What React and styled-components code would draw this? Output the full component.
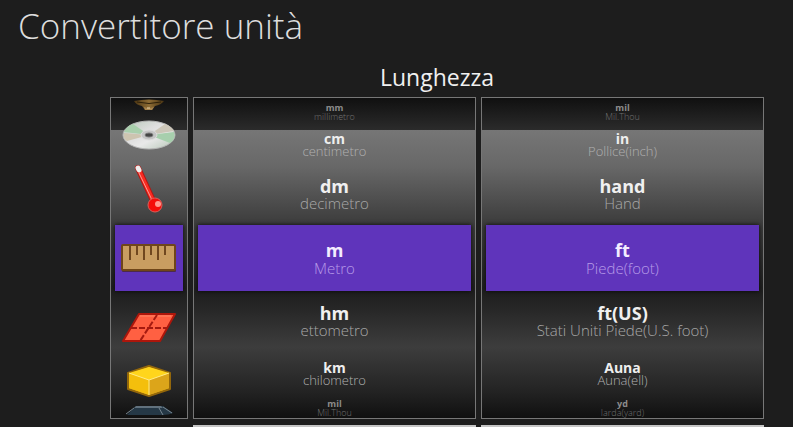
import React, { useState } from "react";
import styled, { createGlobalStyle, css } from "styled-components";

// Each wheel has seven visible slots, the fourth one is the selected unit
const SELECTED = 3;

const fromUnits = [
  { symbol: "mm", name: "millimetro" },
  { symbol: "cm", name: "centimetro" },
  { symbol: "dm", name: "decimetro" },
  { symbol: "m", name: "Metro" },
  { symbol: "hm", name: "ettometro" },
  { symbol: "km", name: "chilometro" },
  { symbol: "mil", name: "Mil.Thou" },
];

const toUnits = [
  { symbol: "mil", name: "Mil.Thou" },
  { symbol: "in", name: "Pollice(inch)" },
  { symbol: "hand", name: "Hand" },
  { symbol: "ft", name: "Piede(foot)" },
  { symbol: "ft(US)", name: "Stati Uniti Piede(U.S. foot)" },
  { symbol: "Auna", name: "Auna(ell)" },
  { symbol: "yd", name: "Iarda(yard)" },
];

// Icons
const HornIcon = () => (
  <svg width="60" height="22" viewBox="0 0 60 22" aria-hidden="true">
    <defs>
      <linearGradient id="horn" x1="0" x2="1">
        <stop offset="0" stopColor="#4a3412" />
        <stop offset="0.5" stopColor="#8d6c35" />
        <stop offset="1" stopColor="#4a3412" />
      </linearGradient>
    </defs>
    <path d="M15 3Q30 0 45 3Q42 7 36 8L33 12H26L23 8Q17 7 15 3Z" fill="url(#horn)" />
    <path d="M18 4Q30 7 42 4" fill="none" stroke="#2d2009" />
    <path d="M25 9Q30 11 35 9L33 12H26Z" fill="#a6834c" />
    <path d="M28 10H31" stroke="#e6d2a9" />
  </svg>
);

const DiscIcon = () => (
  <svg width="60" height="34" viewBox="0 0 60 34" aria-hidden="true">
    <defs>
      <linearGradient id="disc" x1="0" y1="0" x2="1" y2="1">
        <stop offset="0" stopColor="#b8c8b9" />
        <stop offset="0.4" stopColor="#dedede" />
        <stop offset="0.6" stopColor="#e9e9e9" />
        <stop offset="1" stopColor="#b5c6b6" />
      </linearGradient>
    </defs>
    <ellipse cx="30" cy="15" rx="26" ry="14" fill="url(#disc)" stroke="#b4b4b4" />
    <path d="M30 15L5 12Q8 6 14 4Z" fill="#a9cfac" />
    <path d="M30 15L5 13Q4 19 8 21Z" fill="#cdc4b0" />
    <path d="M30 15L46 4Q53 7 55 11Z" fill="#ccc6b8" />
    <path d="M30 15L55 12Q57 19 51 23Z" fill="#a7cfad" />
    <ellipse cx="30" cy="15" rx="8" ry="5" fill="#c5c5c5" stroke="#ddd" />
    <ellipse cx="30" cy="15" rx="4" ry="2" fill="#454545" stroke="#777" />
  </svg>
);

const ThermometerIcon = () => (
  <svg width="60" height="71" viewBox="0 0 60 71" aria-hidden="true">
    <path d="M19 14L36 51" stroke="#b31713" strokeWidth="6" strokeLinecap="round" />
    <path d="M19 14L36 51" stroke="#fb2b22" strokeWidth="4" strokeLinecap="round" />
    <path d="M20 19L33 46" stroke="#ff9a90" />
    <circle cx="36" cy="51" r="7" fill="#f40d0a" stroke="#d9605a" />
    <circle cx="39" cy="50" r="3" fill="#ff9990" />
    <path d="M19 14L20 16" stroke="#eee" strokeWidth="5" strokeLinecap="round" />
  </svg>
);

const RulerIcon = () => (
  <svg width="60" height="66" viewBox="0 0 60 66" aria-hidden="true">
    <rect x="3" y="21" width="54" height="26" rx="1" fill="#4c2a4b" />
    <rect x="3" y="20" width="53" height="25" rx="1" fill="#c99d61" stroke="#704619" strokeWidth="2" />
    <path d="M11 21V35M18 21V30M25 21V35M32 21V30M39 21V35M46 21V30" stroke="#70471f" strokeWidth="2" />
  </svg>
);

const AreaIcon = () => (
  <svg width="60" height="62" viewBox="0 0 60 62" aria-hidden="true">
    <path d="M20 23H56L41 50H4Z" fill="#ff6042" stroke="#ad160b" strokeWidth="2" strokeLinejoin="round" />
    <path d="M21 25H52" stroke="#ff8566" />
    <path d="M38 24L21 50M12 37H48" fill="none" stroke="#a61a10" strokeWidth="2" strokeDasharray="6 2" />
  </svg>
);

const VolumeIcon = () => (
  <svg width="60" height="45" viewBox="0 0 60 45" aria-hidden="true">
    <path d="M30 13L51 20V36L30 43L9 36V20Z" fill="#edb713" stroke="#93670b" strokeWidth="2" strokeLinejoin="round" />
    <path d="M10 20L30 27V42L10 35Z" fill="#f4bf0c" />
    <path d="M50 20L30 27V42L50 35Z" fill="#dca51a" />
    <path d="M30 14L50 20L30 27L10 20Z" fill="#ffd51c" />
    <path d="M10 20L30 27L50 20M30 27V42" fill="none" stroke="#ffeb87" />
  </svg>
);

const WeightIcon = () => (
  <svg width="60" height="20" viewBox="0 0 60 20" aria-hidden="true">
    <path d="M17 8H44L54 15Q50 17 44 17H8Z" fill="#253846" />
    <path d="M17 8H42L44 10H15Z" fill="#61717d" />
    <path d="M15 10L7 16M40 10L44 17M44 9L53 15" fill="none" stroke="#788791" />
  </svg>
);

const categories = [
  { label: "Volume sonoro", icon: <HornIcon /> },
  { label: "Dati", icon: <DiscIcon /> },
  { label: "Temperatura", icon: <ThermometerIcon /> },
  { label: "Lunghezza", icon: <RulerIcon /> },
  { label: "Area", icon: <AreaIcon /> },
  { label: "Volume", icon: <VolumeIcon /> },
  { label: "Peso", icon: <WeightIcon /> },
];

const UnitWheel = ({ label, units }) => (
  <Wheel aria-label={label}>
    {units.map((unit, i) => (
      <UnitSlot key={unit.name} type="button" $selected={i === SELECTED} aria-pressed={i === SELECTED}>
        <UnitSymbol $depth={Math.abs(i - SELECTED)}>{unit.symbol}</UnitSymbol>
        <UnitName $depth={Math.abs(i - SELECTED)}>{unit.name}</UnitName>
      </UnitSlot>
    ))}
  </Wheel>
);

const App = () => {
  const [from, setFrom] = useState("");
  const [to, setTo] = useState("");

  return (
    <Page>
      <GlobalStyle />
      <Title>Convertitore unità</Title>
      <Converter>
        <CategoryTitle>Lunghezza</CategoryTitle>
        <Columns>
          <IconWheel aria-label="Categoria">
            {categories.map((category, i) => (
              <Slot
                key={category.label}
                type="button"
                $selected={i === SELECTED}
                aria-pressed={i === SELECTED}
                aria-label={category.label}
              >
                {category.icon}
              </Slot>
            ))}
          </IconWheel>
          <UnitWheel label="Da" units={fromUnits} />
          <UnitWheel label="A" units={toUnits} />
        </Columns>
        <Columns>
          <span />
          <ValueInput aria-label="Valore" value={from} onChange={(e) => setFrom(e.target.value)} />
          <ValueInput aria-label="Risultato" value={to} onChange={(e) => setTo(e.target.value)} />
        </Columns>
      </Converter>
    </Page>
  );
};

export default App;

const GlobalStyle = createGlobalStyle`
  * {
    box-sizing: border-box;
  }

  body {
    margin: 0;
    background: #1d1d1d;
    font-family: "Open Sans", "Noto Sans", sans-serif;
  }
`;

const Page = styled.main`
  height: 100vh;
  overflow: hidden;
  padding: 0 29px 0 18px;
  color: #f0f0f0;
`;

const Title = styled.h1`
  margin: 0;
  font-size: 35px;
  line-height: 52px;
  font-weight: 300;
  color: #dedede;
`;

const Converter = styled.section`
  display: flex;
  flex-direction: column;
  gap: 6px;
  padding: 11px 0 0 92px;
`;

const CategoryTitle = styled.h2`
  margin: 0;
  font-size: 23px;
  line-height: 28px;
  font-weight: 400;
  text-align: center;
`;

const Columns = styled.div`
  display: grid;
  grid-template-columns: 78px 1fr 1fr;
  gap: 5px;
`;

const Wheel = styled.div`
  display: grid;
  grid-template-rows: 26px 39px 62px 66px 60px 44px 23px;
  border: 1px solid #777;
  background: linear-gradient(
    #101010 0,
    #2b2b2b 32px,
    #767676 32px,
    #686868 68px,
    #3b3b3b 127px,
    #1e1e1e 193px,
    #252525 208px,
    #3d3d3d 249px,
    #242424 292px,
    #101010 100%
  );
`;

const IconWheel = styled(Wheel)`
  grid-template-rows: 22px 34px 71px 66px 62px 45px 20px;
`;

const Slot = styled.button`
  display: flex;
  flex-direction: column;
  align-items: center;
  justify-content: center;
  min-width: 0;
  margin: 0 4px;
  padding: 0;
  border: 0;
  background: transparent;
  color: #f0f0f0;
  font-family: inherit;
  white-space: nowrap;

  svg {
    flex-shrink: 0;
  }

  ${({ $selected }) =>
    $selected &&
    css`
      background: #5f34bb;
      box-shadow: 0 0 4px #080808;
    `}
`;

const UnitSlot = styled(Slot)`
  padding-top: 2px;
`;

// Text shrinks and fades the further a slot is from the selected one
const symbolDepth = [
  { size: 18, line: 18, color: "#f3edff" },
  { size: 18, line: 17, color: "#f0f0f0" },
  { size: 14, line: 13, color: "#eeeeee" },
  { size: 9, line: 9, color: "#8c8c8c" },
];

const nameDepth = [
  { size: 15, line: 18, color: "#b79be8" },
  { size: 15, line: 17, color: "#a8a8a8" },
  { size: 13, line: 13, color: "#b0b0b0" },
  { size: 9, line: 9, color: "#707070" },
];

const UnitSymbol = styled.span`
  font-weight: 700;
  font-size: ${({ $depth }) => symbolDepth[$depth].size}px;
  line-height: ${({ $depth }) => symbolDepth[$depth].line}px;
  color: ${({ $depth }) => symbolDepth[$depth].color};
`;

const UnitName = styled.span`
  font-weight: 300;
  font-size: ${({ $depth }) => nameDepth[$depth].size}px;
  line-height: ${({ $depth }) => nameDepth[$depth].line}px;
  color: ${({ $depth }) => nameDepth[$depth].color};
`;

const ValueInput = styled.input`
  width: 100%;
  height: 36px;
  padding: 0 8px;
  border: 0;
  background: #c4c4c4;
  color: #1d1d1d;
  font-family: inherit;
  font-size: 18px;
`;
